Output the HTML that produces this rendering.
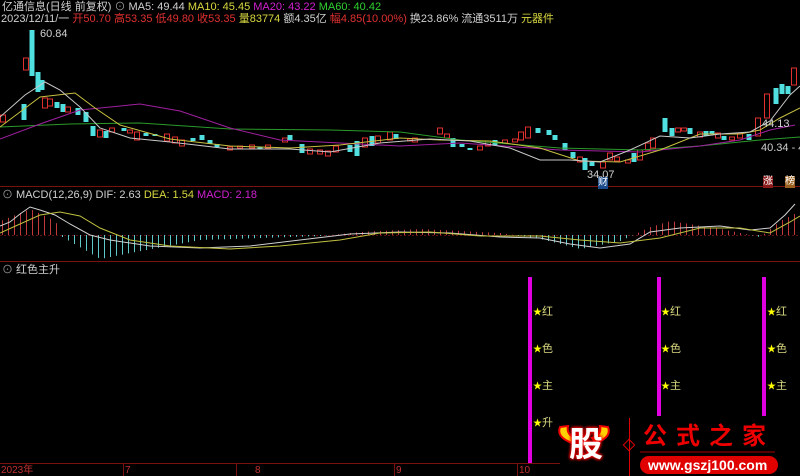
<!DOCTYPE html>
<html><head><meta charset="utf-8"><style>
html,body{margin:0;padding:0;background:#000;width:800px;height:476px;overflow:hidden;position:relative;font-family:"Liberation Sans","Noto Sans CJK SC",sans-serif}
.t{position:absolute;white-space:nowrap;font-size:11px;line-height:12px}
svg{position:absolute;left:0;top:0}
</style></head><body>
<svg width="800" height="476" id="s">
<line x1="0" y1="186.5" x2="800" y2="186.5" stroke="#7a1010"/>
<line x1="0" y1="261.5" x2="800" y2="261.5" stroke="#7a1010"/>
<line x1="0" y1="463.5" x2="560" y2="463.5" stroke="#7a1010"/>
<line x1="0" y1="235.5" x2="800" y2="235.5" stroke="#5a1010" stroke-dasharray="2,2"/>
<g id="c"></g><g id="m"></g>
<polyline fill="none" stroke="#2a9a2a" points="0,127 70,124 140,123 230,129 330,130 400,132 460,140 560,148 640,150 700,146 760,140 800,137"/>
<polyline fill="none" stroke="#a020a0" points="0,139 40,124 80,110 140,104 180,111 230,128 280,140 340,143 400,146 460,143 560,150 640,152 700,146 740,140 770,130 795,125"/>
<polyline fill="none" stroke="#c8c040" points="0,127 20,112 40,97 75,93 95,108 120,125 170,139 230,146 290,148 340,145 400,138 440,140 490,141 540,148 580,161 620,162 660,150 700,134 740,134 760,130 780,118 800,108"/>
<polyline fill="none" stroke="#c8c8c8" points="0,117 25,95 45,82 60,90 80,107 100,128 130,138 170,142 230,149 290,149 330,152 380,143 430,139 470,141 510,148 540,160 570,160 600,162 630,150 660,136 690,138 720,134 750,132 770,121 790,95 800,86"/>
<polyline fill="none" stroke="#d0d0d0" points="0,226 10,222 20,214 30,207 40,210 55,215 70,224 90,235 110,240 150,246 200,248 250,246 300,240 350,234 400,232 450,233 500,237 540,238 570,244 600,248 630,244 650,232 680,228 720,226 750,230 770,228 785,215 795,204"/>
<polyline fill="none" stroke="#c0c040" points="0,233 20,224 40,215 60,212 80,216 100,228 130,240 170,246 230,249 280,246 340,240 380,233 430,232 480,236 540,236 580,240 620,243 660,238 700,228 740,228 770,233 790,222 800,216"/>
<rect x="528" y="277" width="4" height="186" fill="#e000e0"/>
<rect x="657" y="277" width="4" height="139" fill="#e000e0"/>
<rect x="762" y="277" width="4" height="139" fill="#e000e0"/>
<line x1="123.5" y1="464" x2="123.5" y2="476" stroke="#7a1010"/>
<line x1="236.5" y1="464" x2="236.5" y2="476" stroke="#7a1010"/>
<line x1="394.5" y1="464" x2="394.5" y2="476" stroke="#7a1010"/>
<line x1="517.5" y1="464" x2="517.5" y2="476" stroke="#7a1010"/>
<line x1="629.5" y1="418" x2="629.5" y2="476" stroke="#d00"/>
<rect x="625" y="441" width="8" height="8" transform="rotate(45 629 445)" fill="none" stroke="#d00"/>
<line x1="640" y1="452" x2="775" y2="452" stroke="#a00"/>
<rect x="640" y="456" width="138" height="18" rx="9" fill="#e00000"/>
<path d="M560,427 q-4,10 12,16 l4,-5 q-10,-3 -8,-12z M608,427 q4,10 -12,16 l-4,-5 q10,-3 8,-12z" fill="#ffd000" stroke="#e00" stroke-width="2"/>
</svg>
<div class="t" style="left:2px;top:1px;color:#d0d0d0">亿通信息(日线 前复权) <span style="color:#999">⊙</span> MA5: 49.44 <span style="color:#d8d840">MA10: 45.45</span> <span style="color:#d020d0">MA20: 43.22</span> <span style="color:#30d030">MA60: 40.42</span></div>
<div class="t" style="left:1px;top:13px;color:#d0d0d0">2023/12/11/一 <span style="color:#e03030">开50.70 高53.35 低49.80 收53.35</span> <span style="color:#d8d840">量83774</span> 额4.35亿 <span style="color:#e03030">幅4.85(10.00%)</span> 换23.86% 流通3511万 <span style="color:#d8d840">元器件</span></div>
<div class="t" style="left:40px;top:28px;color:#d0d0d0">60.84</div>
<div class="t" style="left:587px;top:169px;color:#d0d0d0">34.07</div>
<div class="t" style="left:598px;top:177px;color:#fff;background:#1a4a8a;font-size:10px">财</div>
<div class="t" style="left:763px;top:176px;color:#fff;background:#8a1a1a;font-size:10px">涨</div>
<div class="t" style="left:785px;top:176px;color:#fff;background:#9a6020;font-size:10px">榜</div>
<div class="t" style="left:761px;top:142px;color:#d0d0d0">40.34 - 41</div>
<div class="t" style="left:762px;top:118px;color:#d0d0d0">44.13</div>
<div class="t" style="left:2px;top:189px;color:#d0d0d0"><span style="color:#999">⊙</span> MACD(12,26,9) DIF: 2.63 <span style="color:#d8d840">DEA: 1.54</span> <span style="color:#d020d0">MACD: 2.18</span></div>
<div class="t" style="left:2px;top:264px;color:#d0d0d0"><span style="color:#999">⊙</span> 红色主升</div>
<div id="st"></div>
<div class="t" style="left:1px;top:465px;color:#c03030;font-size:10px">2023年</div>
<div class="t" style="left:125px;top:465px;color:#c03030;font-size:10px">7</div>
<div class="t" style="left:255px;top:465px;color:#c03030;font-size:10px">8</div>
<div class="t" style="left:396px;top:465px;color:#c03030;font-size:10px">9</div>
<div class="t" style="left:519px;top:465px;color:#c03030;font-size:10px">10</div>
<div class="t" style="left:569px;top:425px;font-size:34px;line-height:40px;font-weight:bold;color:#fff;text-shadow:0 0 3px #e00,0 0 3px #e00,0 0 3px #e00">股</div>
<div class="t" style="left:643px;top:424px;font-size:24px;line-height:26px;color:#e00;letter-spacing:9px;font-weight:bold">公式之家</div>
<div class="t" style="left:648px;top:457px;font-size:14px;line-height:16px;color:#fff;font-weight:bold">www.gszj100.com</div>
<script>
var s=document.getElementById('st'),h='';
[[533,4],[661,3],[767,3]].forEach(function(a){var w=['红','色','主','升'];for(var i=0;i<a[1];i++){h+='<div class="t" style="left:'+a[0]+'px;top:'+(306+i*37)+'px;color:#d8d880;font-size:11px"><span style="color:#ff0;font-size:9px">★</span>'+w[i]+'</div>';}});
s.innerHTML=h;
var ns='http://www.w3.org/2000/svg',m=document.getElementById('m');
function dif(x){var pts=[[0,14],[30,26],[55,14],[62,-2],[100,-24],[130,-18],[200,-5],[320,-1],[360,3],[420,6],[500,2],[540,-4],[580,-14],[620,-6],[650,8],[670,14],[720,6],[760,-2],[780,14],[800,24]];for(var i=1;i<pts.length;i++){if(x<=pts[i][0]){var a=pts[i-1],b=pts[i];return a[1]+(b[1]-a[1])*(x-a[0])/(b[0]-a[0]);}}return 24;}
for(var x=2;x<800;x+=6){var v=dif(x);var l=document.createElementNS(ns,'line');l.setAttribute('x1',x+.5);l.setAttribute('x2',x+.5);l.setAttribute('y1',235);l.setAttribute('y2',235-v);l.setAttribute('stroke',v>=0?'#c03a3a':'#5fc8c8');m.appendChild(l);}
var c=document.getElementById('c');
var cs=[[3,115,122,1],[24,104,120,0],[26,58,70,1],[32,30,76,0],[38,72,92,0],[42,80,90,0],[45,98,108,1],[50,99,106,1],[57,102,108,0],[63,104,112,0],[68,107,112,1],[78,108,115,0],[86,112,122,0],[93,126,136,0],[100,130,137,1],[106,131,138,0],[112,128,132,1],[124,128,131,0],[130,130,133,1],[137,132,140,1],[146,133,136,0],[155,134,136,0],[167,134,141,1],[175,137,143,1],[182,140,146,1],[193,138,141,0],[202,135,140,0],[210,140,144,0],[217,144,147,0],[230,147,150,1],[240,146,148,1],[252,145,148,1],[260,147,149,0],[268,145,148,1],[285,138,142,1],[290,135,140,0],[302,144,153,0],[310,149,154,1],[320,150,154,1],[328,151,156,1],[336,146,152,1],[350,145,152,0],[357,141,156,0],[365,138,147,1],[372,136,146,0],[378,136,143,1],[390,132,140,1],[396,134,139,0],[410,139,140,1],[415,138,142,1],[440,128,134,1],[447,134,138,1],[453,138,147,0],[462,144,147,0],[470,148,150,0],[480,146,150,1],[488,141,146,1],[495,140,145,0],[505,140,143,1],[515,139,142,1],[521,132,140,1],[528,127,138,1],[538,128,133,0],[549,130,135,0],[555,135,140,0],[565,143,150,0],[573,152,158,0],[580,157,162,1],[585,158,170,0],[592,162,166,0],[603,162,168,1],[610,153,160,1],[617,157,161,1],[628,160,163,1],[634,153,162,0],[640,150,160,1],[648,143,150,1],[653,138,148,1],[665,118,132,0],[672,128,136,0],[678,128,132,1],[684,128,131,1],[690,128,134,0],[700,132,137,1],[706,131,136,0],[712,131,134,0],[718,133,138,1],[724,136,140,0],[732,137,140,1],[740,133,138,1],[749,134,140,0],[758,118,136,1],[767,94,118,1],[776,88,104,0],[782,84,94,0],[788,86,94,0],[794,68,85,1]];
cs.forEach(function(a){var r=document.createElementNS(ns,'rect');r.setAttribute('x',a[0]-2.5);r.setAttribute('y',a[1]);r.setAttribute('width',5);r.setAttribute('height',Math.max(2,a[2]-a[1]));if(a[3]){r.setAttribute('fill','none');r.setAttribute('stroke','#e03030');}else r.setAttribute('fill','#50e0e0');c.appendChild(r);});
</script>
</body></html>
